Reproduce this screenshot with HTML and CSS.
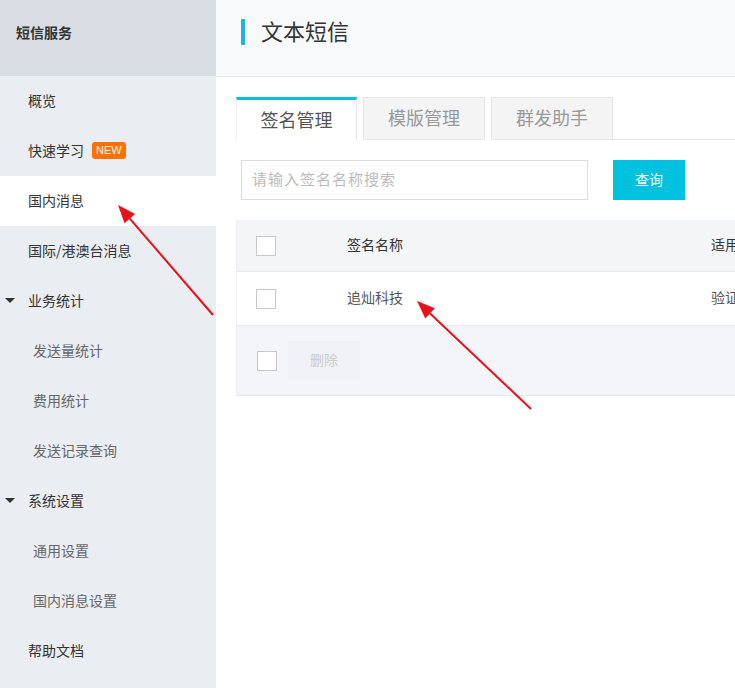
FILE: index.html
```html
<!DOCTYPE html>
<html lang="zh-CN">
<head>
<meta charset="utf-8">
<title>文本短信</title>
<link rel="stylesheet" href="styles.css">
</head>
<body>
<div class="app">
  <aside class="sidebar">
    <div class="side-head">短信服务</div>
    <ul class="menu">
      <li class="item">概览</li>
      <li class="item">快速学习 <span class="badge">NEW</span></li>
      <li class="item active">国内消息</li>
      <li class="item">国际/港澳台消息</li>
      <li class="item group"><span class="caret"></span>业务统计</li>
      <li class="item sub">发送量统计</li>
      <li class="item sub">费用统计</li>
      <li class="item sub">发送记录查询</li>
      <li class="item group"><span class="caret"></span>系统设置</li>
      <li class="item sub">通用设置</li>
      <li class="item sub">国内消息设置</li>
      <li class="item">帮助文档</li>
    </ul>
  </aside>
  <main class="main">
    <header class="page-head">
      <span class="head-bar"></span>
      <h1 class="title">文本短信</h1>
    </header>
    <section class="content">
      <nav class="tabs">
        <div class="tab tab-active">签名管理</div>
        <div class="tab">模版管理</div>
        <div class="tab">群发助手</div>
        <div class="tab-rest"></div>
      </nav>
      <div class="search">
        <input class="search-input" type="text" placeholder="请输入签名名称搜索">
        <button class="btn-query">查询</button>
      </div>
      <div class="table">
        <div class="row row-head">
          <div class="cell-check"><span class="checkbox"></span></div>
          <div class="cell-name">签名名称</div>
          <div class="cell-use">适用</div>
        </div>
        <div class="row row-body">
          <div class="cell-check"><span class="checkbox"></span></div>
          <div class="cell-name">追灿科技</div>
          <div class="cell-use">验证</div>
        </div>
        <div class="row row-foot">
          <div class="cell-foot-check"><span class="checkbox"></span></div>
          <button class="btn-delete">删除</button>
        </div>
      </div>
    </section>
  </main>
  <svg class="annot" width="735" height="688" viewBox="0 0 735 688">
    <line x1="213" y1="315" x2="129.8" y2="218.6" stroke="#e8101a" stroke-width="2"/>
    <polygon points="118,205 135.1,214 124.5,223.2" fill="#e8101a"/>
    <line x1="531" y1="409" x2="430.1" y2="313.4" stroke="#e8101a" stroke-width="2"/>
    <polygon points="417,301 434.9,308.3 425.3,318.5" fill="#e8101a"/>
  </svg>
</div>
</body>
</html>
```
FILE: styles.css
```css
* { box-sizing: border-box; }
html, body { margin: 0; padding: 0; }
body {
  font-family: "Noto Sans CJK SC", "Noto Sans", "Liberation Sans", sans-serif;
  color: #333;
  background: #fff;
  width: 735px;
  height: 688px;
  overflow: hidden;
}
.app {
  position: relative;
  display: flex;
  width: 735px;
  height: 688px;
}
.sidebar {
  width: 216px;
  flex: 0 0 216px;
  background: #eaedf1;
  height: 688px;
}
.side-head {
  height: 76px;
  background: #d9dee4;
  display: flex;
  align-items: center;
  padding: 0 0 13px 16px;
  font-size: 14px;
  font-weight: bold;
  color: #333;
}
.menu {
  list-style: none;
  margin: 0;
  padding: 0;
}
.item {
  height: 50px;
  display: flex;
  align-items: center;
  padding-left: 28px;
  padding-bottom: 3px;
  font-size: 14px;
  color: #333;
  position: relative;
}
.item.active { background: #fff; }
.item.sub { padding-left: 33px; color: #666; }
.caret {
  position: absolute;
  left: 5px;
  top: 22px;
  width: 0;
  height: 0;
  border-left: 5px solid transparent;
  border-right: 5px solid transparent;
  border-top: 5px solid #333;
}
.badge {
  display: inline-block;
  margin-left: 8px;
  margin-top: 2px;
  background: #ff7100;
  color: #fff;
  font-family: "Liberation Sans", Arial, sans-serif;
  font-size: 11px;
  line-height: 17px;
  height: 17px;
  padding: 0 4px;
  border-radius: 3px;
}
.main {
  flex: 1;
  min-width: 0;
  overflow: hidden;
}
.page-head {
  height: 77px;
  background: #f8f9fb;
  border-bottom: 1px solid #e6e8eb;
  display: flex;
  align-items: flex-start;
  padding: 19px 0 0 25px;
}
.head-bar {
  width: 4px;
  height: 26px;
  background: #1fb3e6;
  border-radius: 1px;
}
.title {
  margin: -4px 0 0 16px;
  font-size: 22px;
  line-height: 30px;
  font-weight: normal;
  color: #333;
}
.content {
  padding: 20px 0 0 20px;
}
.tabs {
  display: flex;
  align-items: flex-end;
  height: 43px;
}
.tab {
  width: 122px;
  height: 43px;
  margin-right: 6px;
  display: flex;
  align-items: center;
  justify-content: center;
  font-size: 18px;
  color: #999;
  background: #f4f4f5;
  border: 1px solid #e6e6e6;
  padding-bottom: 3px;
}
.tab-active {
  width: 121px;
  background: #fff;
  color: #555;
  border-top: 3px solid #00c1de;
  border-bottom: none;
  border-left: 1px solid #f0f0f0;
  border-right: 1px solid #e6e6e6;
  margin-right: 6px;
  padding-bottom: 2px;
}
.tab-rest {
  flex: 1;
  height: 1px;
  border-bottom: 1px solid #e6e6e6;
  margin-left: -6px;
  align-self: flex-end;
}
.tabs .tab:not(.tab-active) { border-bottom: 1px solid #e6e6e6; }
.search {
  display: flex;
  align-items: center;
  margin-top: 20px;
  padding-left: 5px;
}
.search-input {
  width: 347px;
  height: 40px;
  border: 1px solid #dcdcdc;
  padding: 0 10px 3px;
  font-family: inherit;
  font-size: 15px;
  letter-spacing: 1px;
  color: #333;
  outline: none;
}
.search-input::placeholder { color: #bbb; }
.btn-query {
  margin-left: 25px;
  width: 72px;
  height: 40px;
  border: none;
  background: #00c1de;
  color: #fff;
  font-family: inherit;
  font-size: 14px;
  padding: 0 0 3px;
}
.table {
  margin-top: 20px;
  border-left: 1px solid #eceef1;
  width: 540px;
}
.row {
  display: flex;
  align-items: center;
  font-size: 14px;
}
.row-head {
  height: 52px;
  background: #f4f5f7;
  border-bottom: 1px solid #e8eaed;
  color: #333;
}
.row-body {
  height: 54px;
  background: #fff;
  border-bottom: 1px solid #e8eaed;
  color: #555;
}
.row-foot {
  height: 70px;
  background: #f4f5f8;
  border-bottom: 1px solid #e6e8eb;
}
.cell-check {
  width: 110px;
  padding-left: 19px;
  display: flex;
}
.cell-name { width: 364px; padding-bottom: 3px; }
.cell-use { flex: 1; white-space: nowrap; padding-bottom: 3px; }
.checkbox {
  display: inline-block;
  width: 20px;
  height: 20px;
  background: #fff;
  border: 1px solid #c8c8c8;
}
.row-body .checkbox { margin-top: 1px; }
.cell-foot-check {
  padding-left: 20px;
  display: flex;
}
.btn-delete {
  margin-left: 11px;
  width: 72px;
  height: 39px;
  border: none;
  background: #f1f2f5;
  color: #ccc;
  font-family: inherit;
  font-size: 14px;
  padding: 0 0 3px;
}
.annot {
  position: absolute;
  left: 0;
  top: 0;
  pointer-events: none;
}
```
